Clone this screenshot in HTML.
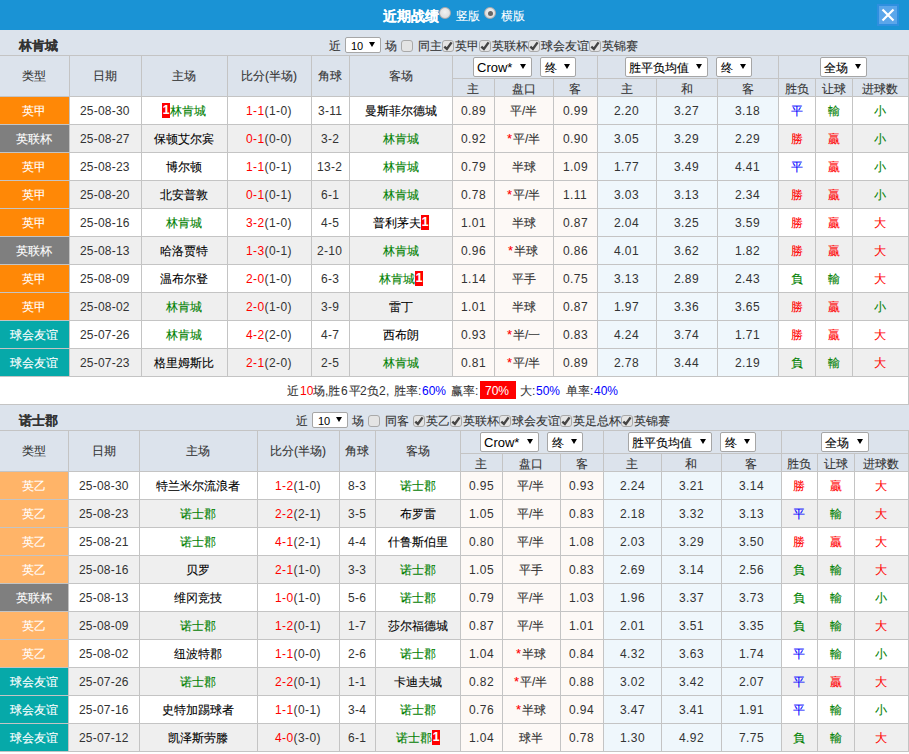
<!DOCTYPE html>
<html><head><meta charset="utf-8"><style>
html,body{margin:0;padding:0;}
body{width:909px;height:754px;overflow:hidden;position:relative;background:#fff;font-family:"Liberation Sans",sans-serif;font-size:12px;color:#333;}
.k{-webkit-text-stroke:0.1px;}
body div{position:absolute;box-sizing:border-box;}
.t{text-align:center;white-space:nowrap;}
.badge{display:inline-block;background:#f00;color:#fff;font-weight:bold;width:8px;height:15px;line-height:15px;text-align:center;vertical-align:middle;font-size:12px;position:relative;top:-1px;}
.cb{width:12px;height:12px;border:1px solid #a9a9a9;border-radius:3px;background:#e4e4e4;}
.cb svg{position:absolute;left:-1px;top:-1px;}
.sel{border:1px solid #a6a6a6;border-radius:2px;background:#fff;}
.sel .sl{color:#000;white-space:nowrap;}
.sel .ar{right:5px;top:50%;margin-top:-3px;width:0;height:0;border-left:3px solid transparent;border-right:3px solid transparent;border-top:5px solid #000;}

</style></head><body>
<div style="left:0px;top:0px;width:909px;height:30px;background:#1a93d5;"></div>
<div class="t k" style="left:383px;top:2px;height:28px;line-height:28px;text-align:left;font-size:14px;font-weight:bold;color:#fff;">近期战绩</div>
<div style="left:439px;top:7px;width:12px;height:12px;border-radius:50%;border:1px solid #b0aaaa;background:radial-gradient(circle at 50% 40%,#f2f2f2,#d6d6d6);"></div>
<div class="t k" style="left:456px;top:2px;height:28px;line-height:28px;text-align:left;color:#fff;">竖版</div>
<div style="left:484px;top:7px;width:12px;height:12px;border-radius:50%;border:1px solid #b0aaaa;background:radial-gradient(circle at 50% 40%,#f2f2f2,#d6d6d6);"><div style="left:2.5px;top:2.5px;width:5px;height:5px;border-radius:50%;background:#666;"></div></div>
<div class="t k" style="left:501px;top:2px;height:28px;line-height:28px;text-align:left;color:#fff;">横版</div>
<div style="left:877px;top:4px;width:22px;height:22px;background:#2f8fe0;"></div>
<div style="left:879px;top:6px;width:18px;height:18px;background:#5ba6ea;"></div>
<div style="left:879px;top:6px;width:18px;height:18px;"><svg width="18" height="18" viewBox="0 0 18 18"><path d="M3.5 3.5 L14.5 14.5 M14.5 3.5 L3.5 14.5" stroke="#fff" stroke-width="2.2"></path></svg></div>
<div style="left:0px;top:30px;width:909px;height:25px;background:#dce3ec;"></div>
<div class="t k" style="left:19px;top:33px;height:25px;line-height:25px;text-align:left;font-weight:bold;font-size:13px;color:#333;">林肯城</div>
<div class="t k" style="left:329px;top:34px;height:25px;line-height:25px;text-align:left;">近</div>
<div class="sel" style="left:345px;top:37px;width:36px;height:16px;"><div class="sl" style="left:5px;top:1px;height:14px;line-height:14px;font-size:11px">10</div><div class="ar"></div></div>
<div class="t k" style="left:385px;top:34px;height:25px;line-height:25px;text-align:left;">场</div>
<div class="cb" style="left:401px;top:40px"></div>
<div class="t k" style="left:418px;top:34px;height:25px;line-height:25px;text-align:left;">同主</div>
<div class="cb" style="left:442px;top:40px"><svg width="12" height="12" viewBox="0 0 12 12"><path d="M2.3 6.6 L4.9 9.0 L9.6 2.4" fill="none" stroke="#444" stroke-width="2.4"></path></svg></div>
<div class="t k" style="left:455px;top:34px;height:25px;line-height:25px;text-align:left;">英甲</div>
<div class="cb" style="left:479px;top:40px"><svg width="12" height="12" viewBox="0 0 12 12"><path d="M2.3 6.6 L4.9 9.0 L9.6 2.4" fill="none" stroke="#444" stroke-width="2.4"></path></svg></div>
<div class="t k" style="left:492px;top:34px;height:25px;line-height:25px;text-align:left;">英联杯</div>
<div class="cb" style="left:528px;top:40px"><svg width="12" height="12" viewBox="0 0 12 12"><path d="M2.3 6.6 L4.9 9.0 L9.6 2.4" fill="none" stroke="#444" stroke-width="2.4"></path></svg></div>
<div class="t k" style="left:541px;top:34px;height:25px;line-height:25px;text-align:left;">球会友谊</div>
<div class="cb" style="left:589px;top:40px"><svg width="12" height="12" viewBox="0 0 12 12"><path d="M2.3 6.6 L4.9 9.0 L9.6 2.4" fill="none" stroke="#444" stroke-width="2.4"></path></svg></div>
<div class="t k" style="left:602px;top:34px;height:25px;line-height:25px;text-align:left;">英锦赛</div>
<div style="left:0px;top:55px;width:909px;height:1px;background:#c4c4c4;"></div>
<div style="left:0px;top:56px;width:909px;height:40px;background:#dce3ec;"></div>
<div style="left:0px;top:96px;width:909px;height:1px;background:#c4c4c4;"></div>
<div style="left:452px;top:78px;width:457px;height:1px;background:#c4c4c4;"></div>
<div class="t k" style="left: 22px; top: 56px; height: 40px; line-height: 40px; color: rgb(51, 51, 51); text-align: left;"><span>类型</span></div>
<div class="t k" style="left: 93px; top: 56px; height: 40px; line-height: 40px; color: rgb(51, 51, 51); text-align: left;"><span>日期</span></div>
<div class="t k" style="left: 172px; top: 56px; height: 40px; line-height: 40px; color: rgb(51, 51, 51); text-align: left;"><span>主场</span></div>
<div class="t k" style="left: 241px; top: 56px; height: 40px; line-height: 40px; color: rgb(51, 51, 51); text-align: left;"><span>比分(半场)</span></div>
<div class="t k" style="left: 318px; top: 56px; height: 40px; line-height: 40px; color: rgb(51, 51, 51); text-align: left;"><span>角球</span></div>
<div class="t k" style="left: 389px; top: 56px; height: 40px; line-height: 40px; color: rgb(51, 51, 51); text-align: left;"><span>客场</span></div>
<div class="t k" style="left: 467px; top: 81px; height: 17px; line-height: 17px; color: rgb(51, 51, 51); text-align: left;"><span>主</span></div>
<div class="t k" style="left: 512px; top: 81px; height: 17px; line-height: 17px; color: rgb(51, 51, 51); text-align: left;"><span>盘口</span></div>
<div class="t k" style="left: 569px; top: 81px; height: 17px; line-height: 17px; color: rgb(51, 51, 51); text-align: left;"><span>客</span></div>
<div class="t k" style="left: 621px; top: 81px; height: 17px; line-height: 17px; color: rgb(51, 51, 51); text-align: left;"><span>主</span></div>
<div class="t k" style="left: 681px; top: 81px; height: 17px; line-height: 17px; color: rgb(51, 51, 51); text-align: left;"><span>和</span></div>
<div class="t k" style="left: 742px; top: 81px; height: 17px; line-height: 17px; color: rgb(51, 51, 51); text-align: left;"><span>客</span></div>
<div class="t k" style="left: 785px; top: 81px; height: 17px; line-height: 17px; color: rgb(51, 51, 51); text-align: left;"><span>胜负</span></div>
<div class="t k" style="left: 822px; top: 81px; height: 17px; line-height: 17px; color: rgb(51, 51, 51); text-align: left;"><span>让球</span></div>
<div class="t k" style="left: 862px; top: 81px; height: 17px; line-height: 17px; color: rgb(51, 51, 51); text-align: left;"><span>进球数</span></div>
<div style="left:0px;top:97px;width:909px;height:27px;background:#fff;"></div>
<div style="left:0px;top:97px;width:69px;height:27px;background:#ff8806;"></div>
<div style="left:453px;top:97px;width:144px;height:27px;background:#fdf9f6;"></div>
<div style="left:598px;top:97px;width:180px;height:27px;background:#eff7fc;"></div>
<div class="t k" style="left: 22px; top: 98px; height: 27px; line-height: 27px; color: rgb(255, 255, 255); text-align: left;"><span>英甲</span></div>
<div class="t" style="left: 80px; top: 98px; height: 27px; line-height: 27px; color: rgb(51, 51, 51); letter-spacing: 0.2px; text-align: left;"><span>25-08-30</span></div>
<div class="t k" style="left: 162px; top: 98px; height: 27px; line-height: 27px; text-align: left;"><span><span class="badge">1</span><span style="color:#008000">林肯城</span></span></div>
<div class="t" style="left: 246px; top: 98px; height: 27px; line-height: 27px; color: rgb(51, 51, 51); letter-spacing: 0.4px; text-align: left;"><span><span style="color:#ff0000">1-1</span>(1-0)</span></div>
<div class="t" style="left: 318px; top: 98px; height: 27px; line-height: 27px; color: rgb(51, 51, 51); letter-spacing: 0.3px; text-align: left;"><span>3-11</span></div>
<div class="t k" style="left: 365px; top: 98px; height: 27px; line-height: 27px; text-align: left;"><span><span style="color:#000">曼斯菲尔德城</span></span></div>
<div class="t" style="left: 461px; top: 98px; height: 27px; line-height: 27px; color: rgb(51, 51, 51); letter-spacing: 0.4px; text-align: left;"><span>0.89</span></div>
<div class="t k" style="left: 510px; top: 98px; height: 27px; line-height: 27px; color: rgb(51, 51, 51); text-align: left;"><span>平/半</span></div>
<div class="t" style="left: 563px; top: 98px; height: 27px; line-height: 27px; color: rgb(51, 51, 51); letter-spacing: 0.4px; text-align: left;"><span>0.99</span></div>
<div class="t" style="left: 614px; top: 98px; height: 27px; line-height: 27px; color: rgb(51, 51, 51); letter-spacing: 0.4px; text-align: left;"><span>2.20</span></div>
<div class="t" style="left: 674px; top: 98px; height: 27px; line-height: 27px; color: rgb(51, 51, 51); letter-spacing: 0.4px; text-align: left;"><span>3.27</span></div>
<div class="t" style="left: 735px; top: 98px; height: 27px; line-height: 27px; color: rgb(51, 51, 51); letter-spacing: 0.4px; text-align: left;"><span>3.18</span></div>
<div class="t k" style="left: 791px; top: 98px; height: 27px; line-height: 27px; text-align: left;"><span><span style="color:#0000ff">平</span></span></div>
<div class="t k" style="left: 828px; top: 98px; height: 27px; line-height: 27px; text-align: left;"><span><span style="color:#008000">輸</span></span></div>
<div class="t k" style="left: 874px; top: 98px; height: 27px; line-height: 27px; text-align: left;"><span><span style="color:#008000">小</span></span></div>
<div style="left:0px;top:124px;width:909px;height:1px;background:#c4c4c4;"></div>
<div style="left:0px;top:125px;width:909px;height:27px;background:#efefef;"></div>
<div style="left:0px;top:125px;width:69px;height:27px;background:#7f7f7f;"></div>
<div style="left:453px;top:125px;width:144px;height:27px;background:#fdf9f6;"></div>
<div style="left:598px;top:125px;width:180px;height:27px;background:#eff7fc;"></div>
<div class="t k" style="left: 16px; top: 126px; height: 27px; line-height: 27px; color: rgb(255, 255, 255); text-align: left;"><span>英联杯</span></div>
<div class="t" style="left: 80px; top: 126px; height: 27px; line-height: 27px; color: rgb(51, 51, 51); letter-spacing: 0.2px; text-align: left;"><span>25-08-27</span></div>
<div class="t k" style="left: 154px; top: 126px; height: 27px; line-height: 27px; text-align: left;"><span><span style="color:#000">保顿艾尔宾</span></span></div>
<div class="t" style="left: 246px; top: 126px; height: 27px; line-height: 27px; color: rgb(51, 51, 51); letter-spacing: 0.4px; text-align: left;"><span><span style="color:#ff0000">0-1</span>(0-0)</span></div>
<div class="t" style="left: 321px; top: 126px; height: 27px; line-height: 27px; color: rgb(51, 51, 51); letter-spacing: 0.3px; text-align: left;"><span>3-2</span></div>
<div class="t k" style="left: 383px; top: 126px; height: 27px; line-height: 27px; text-align: left;"><span><span style="color:#008000">林肯城</span></span></div>
<div class="t" style="left: 461px; top: 126px; height: 27px; line-height: 27px; color: rgb(51, 51, 51); letter-spacing: 0.4px; text-align: left;"><span>0.92</span></div>
<div class="t k" style="left: 507px; top: 126px; height: 27px; line-height: 27px; color: rgb(51, 51, 51); text-align: left;"><span><span style="color:#ff0000;font-size:13px;margin-right:1px;line-height:0;">*</span>平/半</span></div>
<div class="t" style="left: 563px; top: 126px; height: 27px; line-height: 27px; color: rgb(51, 51, 51); letter-spacing: 0.4px; text-align: left;"><span>0.90</span></div>
<div class="t" style="left: 614px; top: 126px; height: 27px; line-height: 27px; color: rgb(51, 51, 51); letter-spacing: 0.4px; text-align: left;"><span>3.05</span></div>
<div class="t" style="left: 674px; top: 126px; height: 27px; line-height: 27px; color: rgb(51, 51, 51); letter-spacing: 0.4px; text-align: left;"><span>3.29</span></div>
<div class="t" style="left: 735px; top: 126px; height: 27px; line-height: 27px; color: rgb(51, 51, 51); letter-spacing: 0.4px; text-align: left;"><span>2.29</span></div>
<div class="t k" style="left: 791px; top: 126px; height: 27px; line-height: 27px; text-align: left;"><span><span style="color:#ff0000">勝</span></span></div>
<div class="t k" style="left: 828px; top: 126px; height: 27px; line-height: 27px; text-align: left;"><span><span style="color:#ff0000">贏</span></span></div>
<div class="t k" style="left: 874px; top: 126px; height: 27px; line-height: 27px; text-align: left;"><span><span style="color:#008000">小</span></span></div>
<div style="left:0px;top:152px;width:909px;height:1px;background:#c4c4c4;"></div>
<div style="left:0px;top:153px;width:909px;height:27px;background:#fff;"></div>
<div style="left:0px;top:153px;width:69px;height:27px;background:#ff8806;"></div>
<div style="left:453px;top:153px;width:144px;height:27px;background:#fdf9f6;"></div>
<div style="left:598px;top:153px;width:180px;height:27px;background:#eff7fc;"></div>
<div class="t k" style="left: 22px; top: 154px; height: 27px; line-height: 27px; color: rgb(255, 255, 255); text-align: left;"><span>英甲</span></div>
<div class="t" style="left: 80px; top: 154px; height: 27px; line-height: 27px; color: rgb(51, 51, 51); letter-spacing: 0.2px; text-align: left;"><span>25-08-23</span></div>
<div class="t k" style="left: 166px; top: 154px; height: 27px; line-height: 27px; text-align: left;"><span><span style="color:#000">博尔顿</span></span></div>
<div class="t" style="left: 246px; top: 154px; height: 27px; line-height: 27px; color: rgb(51, 51, 51); letter-spacing: 0.4px; text-align: left;"><span><span style="color:#ff0000">1-1</span>(0-1)</span></div>
<div class="t" style="left: 317px; top: 154px; height: 27px; line-height: 27px; color: rgb(51, 51, 51); letter-spacing: 0.3px; text-align: left;"><span>13-2</span></div>
<div class="t k" style="left: 383px; top: 154px; height: 27px; line-height: 27px; text-align: left;"><span><span style="color:#008000">林肯城</span></span></div>
<div class="t" style="left: 461px; top: 154px; height: 27px; line-height: 27px; color: rgb(51, 51, 51); letter-spacing: 0.4px; text-align: left;"><span>0.79</span></div>
<div class="t k" style="left: 512px; top: 154px; height: 27px; line-height: 27px; color: rgb(51, 51, 51); text-align: left;"><span>半球</span></div>
<div class="t" style="left: 563px; top: 154px; height: 27px; line-height: 27px; color: rgb(51, 51, 51); letter-spacing: 0.4px; text-align: left;"><span>1.09</span></div>
<div class="t" style="left: 614px; top: 154px; height: 27px; line-height: 27px; color: rgb(51, 51, 51); letter-spacing: 0.4px; text-align: left;"><span>1.77</span></div>
<div class="t" style="left: 674px; top: 154px; height: 27px; line-height: 27px; color: rgb(51, 51, 51); letter-spacing: 0.4px; text-align: left;"><span>3.49</span></div>
<div class="t" style="left: 735px; top: 154px; height: 27px; line-height: 27px; color: rgb(51, 51, 51); letter-spacing: 0.4px; text-align: left;"><span>4.41</span></div>
<div class="t k" style="left: 791px; top: 154px; height: 27px; line-height: 27px; text-align: left;"><span><span style="color:#0000ff">平</span></span></div>
<div class="t k" style="left: 828px; top: 154px; height: 27px; line-height: 27px; text-align: left;"><span><span style="color:#ff0000">贏</span></span></div>
<div class="t k" style="left: 874px; top: 154px; height: 27px; line-height: 27px; text-align: left;"><span><span style="color:#008000">小</span></span></div>
<div style="left:0px;top:180px;width:909px;height:1px;background:#c4c4c4;"></div>
<div style="left:0px;top:181px;width:909px;height:27px;background:#efefef;"></div>
<div style="left:0px;top:181px;width:69px;height:27px;background:#ff8806;"></div>
<div style="left:453px;top:181px;width:144px;height:27px;background:#fdf9f6;"></div>
<div style="left:598px;top:181px;width:180px;height:27px;background:#eff7fc;"></div>
<div class="t k" style="left: 22px; top: 182px; height: 27px; line-height: 27px; color: rgb(255, 255, 255); text-align: left;"><span>英甲</span></div>
<div class="t" style="left: 80px; top: 182px; height: 27px; line-height: 27px; color: rgb(51, 51, 51); letter-spacing: 0.2px; text-align: left;"><span>25-08-20</span></div>
<div class="t k" style="left: 160px; top: 182px; height: 27px; line-height: 27px; text-align: left;"><span><span style="color:#000">北安普敦</span></span></div>
<div class="t" style="left: 246px; top: 182px; height: 27px; line-height: 27px; color: rgb(51, 51, 51); letter-spacing: 0.4px; text-align: left;"><span><span style="color:#ff0000">0-1</span>(0-1)</span></div>
<div class="t" style="left: 321px; top: 182px; height: 27px; line-height: 27px; color: rgb(51, 51, 51); letter-spacing: 0.3px; text-align: left;"><span>6-1</span></div>
<div class="t k" style="left: 383px; top: 182px; height: 27px; line-height: 27px; text-align: left;"><span><span style="color:#008000">林肯城</span></span></div>
<div class="t" style="left: 461px; top: 182px; height: 27px; line-height: 27px; color: rgb(51, 51, 51); letter-spacing: 0.4px; text-align: left;"><span>0.78</span></div>
<div class="t k" style="left: 507px; top: 182px; height: 27px; line-height: 27px; color: rgb(51, 51, 51); text-align: left;"><span><span style="color:#ff0000;font-size:13px;margin-right:1px;line-height:0;">*</span>平/半</span></div>
<div class="t" style="left: 563px; top: 182px; height: 27px; line-height: 27px; color: rgb(51, 51, 51); letter-spacing: 0.4px; text-align: left;"><span>1.11</span></div>
<div class="t" style="left: 614px; top: 182px; height: 27px; line-height: 27px; color: rgb(51, 51, 51); letter-spacing: 0.4px; text-align: left;"><span>3.03</span></div>
<div class="t" style="left: 674px; top: 182px; height: 27px; line-height: 27px; color: rgb(51, 51, 51); letter-spacing: 0.4px; text-align: left;"><span>3.13</span></div>
<div class="t" style="left: 735px; top: 182px; height: 27px; line-height: 27px; color: rgb(51, 51, 51); letter-spacing: 0.4px; text-align: left;"><span>2.34</span></div>
<div class="t k" style="left: 791px; top: 182px; height: 27px; line-height: 27px; text-align: left;"><span><span style="color:#ff0000">勝</span></span></div>
<div class="t k" style="left: 828px; top: 182px; height: 27px; line-height: 27px; text-align: left;"><span><span style="color:#ff0000">贏</span></span></div>
<div class="t k" style="left: 874px; top: 182px; height: 27px; line-height: 27px; text-align: left;"><span><span style="color:#008000">小</span></span></div>
<div style="left:0px;top:208px;width:909px;height:1px;background:#c4c4c4;"></div>
<div style="left:0px;top:209px;width:909px;height:27px;background:#fff;"></div>
<div style="left:0px;top:209px;width:69px;height:27px;background:#ff8806;"></div>
<div style="left:453px;top:209px;width:144px;height:27px;background:#fdf9f6;"></div>
<div style="left:598px;top:209px;width:180px;height:27px;background:#eff7fc;"></div>
<div class="t k" style="left: 22px; top: 210px; height: 27px; line-height: 27px; color: rgb(255, 255, 255); text-align: left;"><span>英甲</span></div>
<div class="t" style="left: 80px; top: 210px; height: 27px; line-height: 27px; color: rgb(51, 51, 51); letter-spacing: 0.2px; text-align: left;"><span>25-08-16</span></div>
<div class="t k" style="left: 166px; top: 210px; height: 27px; line-height: 27px; text-align: left;"><span><span style="color:#008000">林肯城</span></span></div>
<div class="t" style="left: 246px; top: 210px; height: 27px; line-height: 27px; color: rgb(51, 51, 51); letter-spacing: 0.4px; text-align: left;"><span><span style="color:#ff0000">3-2</span>(1-0)</span></div>
<div class="t" style="left: 321px; top: 210px; height: 27px; line-height: 27px; color: rgb(51, 51, 51); letter-spacing: 0.3px; text-align: left;"><span>4-5</span></div>
<div class="t k" style="left: 373px; top: 210px; height: 27px; line-height: 27px; text-align: left;"><span><span style="color:#000">普利茅夫</span><span class="badge">1</span></span></div>
<div class="t" style="left: 461px; top: 210px; height: 27px; line-height: 27px; color: rgb(51, 51, 51); letter-spacing: 0.4px; text-align: left;"><span>1.01</span></div>
<div class="t k" style="left: 512px; top: 210px; height: 27px; line-height: 27px; color: rgb(51, 51, 51); text-align: left;"><span>半球</span></div>
<div class="t" style="left: 563px; top: 210px; height: 27px; line-height: 27px; color: rgb(51, 51, 51); letter-spacing: 0.4px; text-align: left;"><span>0.87</span></div>
<div class="t" style="left: 614px; top: 210px; height: 27px; line-height: 27px; color: rgb(51, 51, 51); letter-spacing: 0.4px; text-align: left;"><span>2.04</span></div>
<div class="t" style="left: 674px; top: 210px; height: 27px; line-height: 27px; color: rgb(51, 51, 51); letter-spacing: 0.4px; text-align: left;"><span>3.25</span></div>
<div class="t" style="left: 735px; top: 210px; height: 27px; line-height: 27px; color: rgb(51, 51, 51); letter-spacing: 0.4px; text-align: left;"><span>3.59</span></div>
<div class="t k" style="left: 791px; top: 210px; height: 27px; line-height: 27px; text-align: left;"><span><span style="color:#ff0000">勝</span></span></div>
<div class="t k" style="left: 828px; top: 210px; height: 27px; line-height: 27px; text-align: left;"><span><span style="color:#ff0000">贏</span></span></div>
<div class="t k" style="left: 874px; top: 210px; height: 27px; line-height: 27px; text-align: left;"><span><span style="color:#ff0000">大</span></span></div>
<div style="left:0px;top:236px;width:909px;height:1px;background:#c4c4c4;"></div>
<div style="left:0px;top:237px;width:909px;height:27px;background:#efefef;"></div>
<div style="left:0px;top:237px;width:69px;height:27px;background:#7f7f7f;"></div>
<div style="left:453px;top:237px;width:144px;height:27px;background:#fdf9f6;"></div>
<div style="left:598px;top:237px;width:180px;height:27px;background:#eff7fc;"></div>
<div class="t k" style="left: 16px; top: 238px; height: 27px; line-height: 27px; color: rgb(255, 255, 255); text-align: left;"><span>英联杯</span></div>
<div class="t" style="left: 80px; top: 238px; height: 27px; line-height: 27px; color: rgb(51, 51, 51); letter-spacing: 0.2px; text-align: left;"><span>25-08-13</span></div>
<div class="t k" style="left: 160px; top: 238px; height: 27px; line-height: 27px; text-align: left;"><span><span style="color:#000">哈洛贾特</span></span></div>
<div class="t" style="left: 246px; top: 238px; height: 27px; line-height: 27px; color: rgb(51, 51, 51); letter-spacing: 0.4px; text-align: left;"><span><span style="color:#ff0000">1-3</span>(0-1)</span></div>
<div class="t" style="left: 317px; top: 238px; height: 27px; line-height: 27px; color: rgb(51, 51, 51); letter-spacing: 0.3px; text-align: left;"><span>2-10</span></div>
<div class="t k" style="left: 383px; top: 238px; height: 27px; line-height: 27px; text-align: left;"><span><span style="color:#008000">林肯城</span></span></div>
<div class="t" style="left: 461px; top: 238px; height: 27px; line-height: 27px; color: rgb(51, 51, 51); letter-spacing: 0.4px; text-align: left;"><span>0.96</span></div>
<div class="t k" style="left: 508px; top: 238px; height: 27px; line-height: 27px; color: rgb(51, 51, 51); text-align: left;"><span><span style="color:#ff0000;font-size:13px;margin-right:1px;line-height:0;">*</span>半球</span></div>
<div class="t" style="left: 563px; top: 238px; height: 27px; line-height: 27px; color: rgb(51, 51, 51); letter-spacing: 0.4px; text-align: left;"><span>0.86</span></div>
<div class="t" style="left: 614px; top: 238px; height: 27px; line-height: 27px; color: rgb(51, 51, 51); letter-spacing: 0.4px; text-align: left;"><span>4.01</span></div>
<div class="t" style="left: 674px; top: 238px; height: 27px; line-height: 27px; color: rgb(51, 51, 51); letter-spacing: 0.4px; text-align: left;"><span>3.62</span></div>
<div class="t" style="left: 735px; top: 238px; height: 27px; line-height: 27px; color: rgb(51, 51, 51); letter-spacing: 0.4px; text-align: left;"><span>1.82</span></div>
<div class="t k" style="left: 791px; top: 238px; height: 27px; line-height: 27px; text-align: left;"><span><span style="color:#ff0000">勝</span></span></div>
<div class="t k" style="left: 828px; top: 238px; height: 27px; line-height: 27px; text-align: left;"><span><span style="color:#ff0000">贏</span></span></div>
<div class="t k" style="left: 874px; top: 238px; height: 27px; line-height: 27px; text-align: left;"><span><span style="color:#ff0000">大</span></span></div>
<div style="left:0px;top:264px;width:909px;height:1px;background:#c4c4c4;"></div>
<div style="left:0px;top:265px;width:909px;height:27px;background:#fff;"></div>
<div style="left:0px;top:265px;width:69px;height:27px;background:#ff8806;"></div>
<div style="left:453px;top:265px;width:144px;height:27px;background:#fdf9f6;"></div>
<div style="left:598px;top:265px;width:180px;height:27px;background:#eff7fc;"></div>
<div class="t k" style="left: 22px; top: 266px; height: 27px; line-height: 27px; color: rgb(255, 255, 255); text-align: left;"><span>英甲</span></div>
<div class="t" style="left: 80px; top: 266px; height: 27px; line-height: 27px; color: rgb(51, 51, 51); letter-spacing: 0.2px; text-align: left;"><span>25-08-09</span></div>
<div class="t k" style="left: 160px; top: 266px; height: 27px; line-height: 27px; text-align: left;"><span><span style="color:#000">温布尔登</span></span></div>
<div class="t" style="left: 246px; top: 266px; height: 27px; line-height: 27px; color: rgb(51, 51, 51); letter-spacing: 0.4px; text-align: left;"><span><span style="color:#ff0000">2-0</span>(1-0)</span></div>
<div class="t" style="left: 321px; top: 266px; height: 27px; line-height: 27px; color: rgb(51, 51, 51); letter-spacing: 0.3px; text-align: left;"><span>6-3</span></div>
<div class="t k" style="left: 379px; top: 266px; height: 27px; line-height: 27px; text-align: left;"><span><span style="color:#008000">林肯城</span><span class="badge">1</span></span></div>
<div class="t" style="left: 461px; top: 266px; height: 27px; line-height: 27px; color: rgb(51, 51, 51); letter-spacing: 0.4px; text-align: left;"><span>1.14</span></div>
<div class="t k" style="left: 512px; top: 266px; height: 27px; line-height: 27px; color: rgb(51, 51, 51); text-align: left;"><span>平手</span></div>
<div class="t" style="left: 563px; top: 266px; height: 27px; line-height: 27px; color: rgb(51, 51, 51); letter-spacing: 0.4px; text-align: left;"><span>0.75</span></div>
<div class="t" style="left: 614px; top: 266px; height: 27px; line-height: 27px; color: rgb(51, 51, 51); letter-spacing: 0.4px; text-align: left;"><span>3.13</span></div>
<div class="t" style="left: 674px; top: 266px; height: 27px; line-height: 27px; color: rgb(51, 51, 51); letter-spacing: 0.4px; text-align: left;"><span>2.89</span></div>
<div class="t" style="left: 735px; top: 266px; height: 27px; line-height: 27px; color: rgb(51, 51, 51); letter-spacing: 0.4px; text-align: left;"><span>2.43</span></div>
<div class="t k" style="left: 791px; top: 266px; height: 27px; line-height: 27px; text-align: left;"><span><span style="color:#008000">負</span></span></div>
<div class="t k" style="left: 828px; top: 266px; height: 27px; line-height: 27px; text-align: left;"><span><span style="color:#008000">輸</span></span></div>
<div class="t k" style="left: 874px; top: 266px; height: 27px; line-height: 27px; text-align: left;"><span><span style="color:#ff0000">大</span></span></div>
<div style="left:0px;top:292px;width:909px;height:1px;background:#c4c4c4;"></div>
<div style="left:0px;top:293px;width:909px;height:27px;background:#efefef;"></div>
<div style="left:0px;top:293px;width:69px;height:27px;background:#ff8806;"></div>
<div style="left:453px;top:293px;width:144px;height:27px;background:#fdf9f6;"></div>
<div style="left:598px;top:293px;width:180px;height:27px;background:#eff7fc;"></div>
<div class="t k" style="left: 22px; top: 294px; height: 27px; line-height: 27px; color: rgb(255, 255, 255); text-align: left;"><span>英甲</span></div>
<div class="t" style="left: 80px; top: 294px; height: 27px; line-height: 27px; color: rgb(51, 51, 51); letter-spacing: 0.2px; text-align: left;"><span>25-08-02</span></div>
<div class="t k" style="left: 166px; top: 294px; height: 27px; line-height: 27px; text-align: left;"><span><span style="color:#008000">林肯城</span></span></div>
<div class="t" style="left: 246px; top: 294px; height: 27px; line-height: 27px; color: rgb(51, 51, 51); letter-spacing: 0.4px; text-align: left;"><span><span style="color:#ff0000">2-0</span>(1-0)</span></div>
<div class="t" style="left: 321px; top: 294px; height: 27px; line-height: 27px; color: rgb(51, 51, 51); letter-spacing: 0.3px; text-align: left;"><span>3-9</span></div>
<div class="t k" style="left: 389px; top: 294px; height: 27px; line-height: 27px; text-align: left;"><span><span style="color:#000">雷丁</span></span></div>
<div class="t" style="left: 461px; top: 294px; height: 27px; line-height: 27px; color: rgb(51, 51, 51); letter-spacing: 0.4px; text-align: left;"><span>1.01</span></div>
<div class="t k" style="left: 512px; top: 294px; height: 27px; line-height: 27px; color: rgb(51, 51, 51); text-align: left;"><span>半球</span></div>
<div class="t" style="left: 563px; top: 294px; height: 27px; line-height: 27px; color: rgb(51, 51, 51); letter-spacing: 0.4px; text-align: left;"><span>0.87</span></div>
<div class="t" style="left: 614px; top: 294px; height: 27px; line-height: 27px; color: rgb(51, 51, 51); letter-spacing: 0.4px; text-align: left;"><span>1.97</span></div>
<div class="t" style="left: 674px; top: 294px; height: 27px; line-height: 27px; color: rgb(51, 51, 51); letter-spacing: 0.4px; text-align: left;"><span>3.36</span></div>
<div class="t" style="left: 735px; top: 294px; height: 27px; line-height: 27px; color: rgb(51, 51, 51); letter-spacing: 0.4px; text-align: left;"><span>3.65</span></div>
<div class="t k" style="left: 791px; top: 294px; height: 27px; line-height: 27px; text-align: left;"><span><span style="color:#ff0000">勝</span></span></div>
<div class="t k" style="left: 828px; top: 294px; height: 27px; line-height: 27px; text-align: left;"><span><span style="color:#ff0000">贏</span></span></div>
<div class="t k" style="left: 874px; top: 294px; height: 27px; line-height: 27px; text-align: left;"><span><span style="color:#008000">小</span></span></div>
<div style="left:0px;top:320px;width:909px;height:1px;background:#c4c4c4;"></div>
<div style="left:0px;top:321px;width:909px;height:27px;background:#fff;"></div>
<div style="left:0px;top:321px;width:69px;height:27px;background:#06a9a9;"></div>
<div style="left:453px;top:321px;width:144px;height:27px;background:#fdf9f6;"></div>
<div style="left:598px;top:321px;width:180px;height:27px;background:#eff7fc;"></div>
<div class="t k" style="left: 10px; top: 322px; height: 27px; line-height: 27px; color: rgb(255, 255, 255); text-align: left;"><span>球会友谊</span></div>
<div class="t" style="left: 80px; top: 322px; height: 27px; line-height: 27px; color: rgb(51, 51, 51); letter-spacing: 0.2px; text-align: left;"><span>25-07-26</span></div>
<div class="t k" style="left: 166px; top: 322px; height: 27px; line-height: 27px; text-align: left;"><span><span style="color:#008000">林肯城</span></span></div>
<div class="t" style="left: 246px; top: 322px; height: 27px; line-height: 27px; color: rgb(51, 51, 51); letter-spacing: 0.4px; text-align: left;"><span><span style="color:#ff0000">4-2</span>(2-0)</span></div>
<div class="t" style="left: 321px; top: 322px; height: 27px; line-height: 27px; color: rgb(51, 51, 51); letter-spacing: 0.3px; text-align: left;"><span>4-7</span></div>
<div class="t k" style="left: 383px; top: 322px; height: 27px; line-height: 27px; text-align: left;"><span><span style="color:#000">西布朗</span></span></div>
<div class="t" style="left: 461px; top: 322px; height: 27px; line-height: 27px; color: rgb(51, 51, 51); letter-spacing: 0.4px; text-align: left;"><span>0.93</span></div>
<div class="t k" style="left: 507px; top: 322px; height: 27px; line-height: 27px; color: rgb(51, 51, 51); text-align: left;"><span><span style="color:#ff0000;font-size:13px;margin-right:1px;line-height:0;">*</span>半/一</span></div>
<div class="t" style="left: 563px; top: 322px; height: 27px; line-height: 27px; color: rgb(51, 51, 51); letter-spacing: 0.4px; text-align: left;"><span>0.83</span></div>
<div class="t" style="left: 614px; top: 322px; height: 27px; line-height: 27px; color: rgb(51, 51, 51); letter-spacing: 0.4px; text-align: left;"><span>4.24</span></div>
<div class="t" style="left: 674px; top: 322px; height: 27px; line-height: 27px; color: rgb(51, 51, 51); letter-spacing: 0.4px; text-align: left;"><span>3.74</span></div>
<div class="t" style="left: 735px; top: 322px; height: 27px; line-height: 27px; color: rgb(51, 51, 51); letter-spacing: 0.4px; text-align: left;"><span>1.71</span></div>
<div class="t k" style="left: 791px; top: 322px; height: 27px; line-height: 27px; text-align: left;"><span><span style="color:#ff0000">勝</span></span></div>
<div class="t k" style="left: 828px; top: 322px; height: 27px; line-height: 27px; text-align: left;"><span><span style="color:#ff0000">贏</span></span></div>
<div class="t k" style="left: 874px; top: 322px; height: 27px; line-height: 27px; text-align: left;"><span><span style="color:#ff0000">大</span></span></div>
<div style="left:0px;top:348px;width:909px;height:1px;background:#c4c4c4;"></div>
<div style="left:0px;top:349px;width:909px;height:27px;background:#efefef;"></div>
<div style="left:0px;top:349px;width:69px;height:27px;background:#06a9a9;"></div>
<div style="left:453px;top:349px;width:144px;height:27px;background:#fdf9f6;"></div>
<div style="left:598px;top:349px;width:180px;height:27px;background:#eff7fc;"></div>
<div class="t k" style="left: 10px; top: 350px; height: 27px; line-height: 27px; color: rgb(255, 255, 255); text-align: left;"><span>球会友谊</span></div>
<div class="t" style="left: 80px; top: 350px; height: 27px; line-height: 27px; color: rgb(51, 51, 51); letter-spacing: 0.2px; text-align: left;"><span>25-07-23</span></div>
<div class="t k" style="left: 154px; top: 350px; height: 27px; line-height: 27px; text-align: left;"><span><span style="color:#000">格里姆斯比</span></span></div>
<div class="t" style="left: 246px; top: 350px; height: 27px; line-height: 27px; color: rgb(51, 51, 51); letter-spacing: 0.4px; text-align: left;"><span><span style="color:#ff0000">2-1</span>(2-0)</span></div>
<div class="t" style="left: 321px; top: 350px; height: 27px; line-height: 27px; color: rgb(51, 51, 51); letter-spacing: 0.3px; text-align: left;"><span>2-5</span></div>
<div class="t k" style="left: 383px; top: 350px; height: 27px; line-height: 27px; text-align: left;"><span><span style="color:#008000">林肯城</span></span></div>
<div class="t" style="left: 461px; top: 350px; height: 27px; line-height: 27px; color: rgb(51, 51, 51); letter-spacing: 0.4px; text-align: left;"><span>0.81</span></div>
<div class="t k" style="left: 507px; top: 350px; height: 27px; line-height: 27px; color: rgb(51, 51, 51); text-align: left;"><span><span style="color:#ff0000;font-size:13px;margin-right:1px;line-height:0;">*</span>平/半</span></div>
<div class="t" style="left: 563px; top: 350px; height: 27px; line-height: 27px; color: rgb(51, 51, 51); letter-spacing: 0.4px; text-align: left;"><span>0.89</span></div>
<div class="t" style="left: 614px; top: 350px; height: 27px; line-height: 27px; color: rgb(51, 51, 51); letter-spacing: 0.4px; text-align: left;"><span>2.78</span></div>
<div class="t" style="left: 674px; top: 350px; height: 27px; line-height: 27px; color: rgb(51, 51, 51); letter-spacing: 0.4px; text-align: left;"><span>3.44</span></div>
<div class="t" style="left: 735px; top: 350px; height: 27px; line-height: 27px; color: rgb(51, 51, 51); letter-spacing: 0.4px; text-align: left;"><span>2.19</span></div>
<div class="t k" style="left: 791px; top: 350px; height: 27px; line-height: 27px; text-align: left;"><span><span style="color:#008000">負</span></span></div>
<div class="t k" style="left: 828px; top: 350px; height: 27px; line-height: 27px; text-align: left;"><span><span style="color:#008000">輸</span></span></div>
<div class="t k" style="left: 874px; top: 350px; height: 27px; line-height: 27px; text-align: left;"><span><span style="color:#ff0000">大</span></span></div>
<div style="left:0px;top:376px;width:909px;height:1px;background:#c4c4c4;"></div>
<div style="left:69px;top:56px;width:1px;height:321px;background:#c4c4c4;"></div>
<div style="left:141px;top:56px;width:1px;height:321px;background:#c4c4c4;"></div>
<div style="left:227px;top:56px;width:1px;height:321px;background:#c4c4c4;"></div>
<div style="left:311px;top:56px;width:1px;height:321px;background:#c4c4c4;"></div>
<div style="left:349px;top:56px;width:1px;height:321px;background:#c4c4c4;"></div>
<div style="left:452px;top:56px;width:1px;height:321px;background:#c4c4c4;"></div>
<div style="left:597px;top:56px;width:1px;height:321px;background:#c4c4c4;"></div>
<div style="left:778px;top:56px;width:1px;height:321px;background:#c4c4c4;"></div>
<div style="left:908px;top:56px;width:1px;height:321px;background:#c4c4c4;"></div>
<div style="left:494px;top:78px;width:1px;height:299px;background:#c4c4c4;"></div>
<div style="left:553px;top:78px;width:1px;height:299px;background:#c4c4c4;"></div>
<div style="left:656px;top:78px;width:1px;height:299px;background:#c4c4c4;"></div>
<div style="left:717px;top:78px;width:1px;height:299px;background:#c4c4c4;"></div>
<div style="left:815px;top:78px;width:1px;height:299px;background:#c4c4c4;"></div>
<div style="left:852px;top:78px;width:1px;height:299px;background:#c4c4c4;"></div>
<div class="sel" style="left:473px;top:57px;width:59px;height:20px;"><div class="sl" style="left:3px;top:1px;height:18px;line-height:18px;font-size:13px">Crow*</div><div class="ar"></div></div>
<div class="sel" style="left:716px;top:57px;width:36px;height:20px;"><div class="sl k" style="left:4px;top:1px;height:18px;line-height:18px;font-size:12px">终</div><div class="ar"></div></div>
<div class="sel" style="left:540px;top:57px;width:36px;height:20px;"><div class="sl k" style="left:4px;top:1px;height:18px;line-height:18px;font-size:12px">终</div><div class="ar"></div></div>
<div class="sel" style="left:625px;top:57px;width:83px;height:20px;"><div class="sl k" style="left:3px;top:1px;height:18px;line-height:18px;font-size:12px">胜平负均值</div><div class="ar"></div></div>
<div class="sel" style="left:820px;top:57px;width:47px;height:20px;"><div class="sl k" style="left:3px;top:1px;height:18px;line-height:18px;font-size:12px">全场</div><div class="ar"></div></div>
<div style="left:0px;top:377px;width:909px;height:27px;background:#fff;"></div>
<div style="left:908px;top:377px;width:1px;height:27px;background:#c4c4c4;"></div>
<div style="left:0px;top:404px;width:909px;height:1px;background:#c4c4c4;"></div>
<div class="t k" style="left:287px;top:378px;height:27px;line-height:27px;text-align:left;color:#333;">近</div>
<div class="t" style="left:300px;top:378px;height:27px;line-height:27px;text-align:left;color:#f00;">10</div>
<div class="t k" style="left:313px;top:378px;height:27px;line-height:27px;text-align:left;color:#333;">场</div>
<div class="t" style="left:325px;top:378px;height:27px;line-height:27px;text-align:left;color:#333;">,</div>
<div class="t k" style="left:328px;top:378px;height:27px;line-height:27px;text-align:left;color:#333;">胜</div>
<div class="t" style="left:341px;top:378px;height:27px;line-height:27px;text-align:left;color:#333;">6</div>
<div class="t k" style="left:349px;top:378px;height:27px;line-height:27px;text-align:left;color:#333;">平</div>
<div class="t" style="left:360px;top:378px;height:27px;line-height:27px;text-align:left;color:#333;">2</div>
<div class="t k" style="left:367px;top:378px;height:27px;line-height:27px;text-align:left;color:#333;">负</div>
<div class="t" style="left:379px;top:378px;height:27px;line-height:27px;text-align:left;color:#333;">2</div>
<div class="t" style="left:386px;top:378px;height:27px;line-height:27px;text-align:left;color:#333;">,</div>
<div class="t k" style="left:394px;top:378px;height:27px;line-height:27px;text-align:left;color:#333;">胜率</div>
<div class="t" style="left:418px;top:378px;height:27px;line-height:27px;text-align:left;color:#333;">:</div>
<div class="t" style="left:422px;top:378px;height:27px;line-height:27px;text-align:left;color:#00f;">60%</div>
<div class="t k" style="left:451px;top:378px;height:27px;line-height:27px;text-align:left;color:#333;">赢率</div>
<div class="t" style="left:475px;top:378px;height:27px;line-height:27px;text-align:left;color:#333;">:</div>
<div class="t k" style="left:520px;top:378px;height:27px;line-height:27px;text-align:left;color:#333;">大</div>
<div class="t" style="left:532px;top:378px;height:27px;line-height:27px;text-align:left;color:#333;">:</div>
<div class="t" style="left:536px;top:378px;height:27px;line-height:27px;text-align:left;color:#00f;">50%</div>
<div class="t k" style="left:566px;top:378px;height:27px;line-height:27px;text-align:left;color:#333;">单率</div>
<div class="t" style="left:590px;top:378px;height:27px;line-height:27px;text-align:left;color:#333;">:</div>
<div class="t" style="left:594px;top:378px;height:27px;line-height:27px;text-align:left;color:#00f;">40%</div>
<div style="left:480px;top:381px;width:36px;height:18px;background:#f00;"></div>
<div class="t" style="left:485px;top:378px;height:27px;line-height:27px;text-align:left;color:#fff;">70%</div>
<div style="left:0px;top:405px;width:909px;height:25px;background:#dce3ec;"></div>
<div class="t k" style="left:19px;top:408px;height:25px;line-height:25px;text-align:left;font-weight:bold;font-size:13px;color:#333;">诺士郡</div>
<div class="t k" style="left:296px;top:409px;height:25px;line-height:25px;text-align:left;">近</div>
<div class="sel" style="left:312px;top:412px;width:36px;height:16px;"><div class="sl" style="left:5px;top:1px;height:14px;line-height:14px;font-size:11px">10</div><div class="ar"></div></div>
<div class="t k" style="left:352px;top:409px;height:25px;line-height:25px;text-align:left;">场</div>
<div class="cb" style="left:368px;top:415px"></div>
<div class="t k" style="left:385px;top:409px;height:25px;line-height:25px;text-align:left;">同客</div>
<div class="cb" style="left:413px;top:415px"><svg width="12" height="12" viewBox="0 0 12 12"><path d="M2.3 6.6 L4.9 9.0 L9.6 2.4" fill="none" stroke="#444" stroke-width="2.4"></path></svg></div>
<div class="t k" style="left:426px;top:409px;height:25px;line-height:25px;text-align:left;">英乙</div>
<div class="cb" style="left:450px;top:415px"><svg width="12" height="12" viewBox="0 0 12 12"><path d="M2.3 6.6 L4.9 9.0 L9.6 2.4" fill="none" stroke="#444" stroke-width="2.4"></path></svg></div>
<div class="t k" style="left:463px;top:409px;height:25px;line-height:25px;text-align:left;">英联杯</div>
<div class="cb" style="left:499px;top:415px"><svg width="12" height="12" viewBox="0 0 12 12"><path d="M2.3 6.6 L4.9 9.0 L9.6 2.4" fill="none" stroke="#444" stroke-width="2.4"></path></svg></div>
<div class="t k" style="left:512px;top:409px;height:25px;line-height:25px;text-align:left;">球会友谊</div>
<div class="cb" style="left:560px;top:415px"><svg width="12" height="12" viewBox="0 0 12 12"><path d="M2.3 6.6 L4.9 9.0 L9.6 2.4" fill="none" stroke="#444" stroke-width="2.4"></path></svg></div>
<div class="t k" style="left:573px;top:409px;height:25px;line-height:25px;text-align:left;">英足总杯</div>
<div class="cb" style="left:621px;top:415px"><svg width="12" height="12" viewBox="0 0 12 12"><path d="M2.3 6.6 L4.9 9.0 L9.6 2.4" fill="none" stroke="#444" stroke-width="2.4"></path></svg></div>
<div class="t k" style="left:634px;top:409px;height:25px;line-height:25px;text-align:left;">英锦赛</div>
<div style="left:0px;top:430px;width:909px;height:1px;background:#c4c4c4;"></div>
<div style="left:0px;top:431px;width:909px;height:40px;background:#dce3ec;"></div>
<div style="left:0px;top:471px;width:909px;height:1px;background:#c4c4c4;"></div>
<div style="left:460px;top:453px;width:449px;height:1px;background:#c4c4c4;"></div>
<div class="t k" style="left: 22px; top: 431px; height: 40px; line-height: 40px; color: rgb(51, 51, 51); text-align: left;"><span>类型</span></div>
<div class="t k" style="left: 92px; top: 431px; height: 40px; line-height: 40px; color: rgb(51, 51, 51); text-align: left;"><span>日期</span></div>
<div class="t k" style="left: 186px; top: 431px; height: 40px; line-height: 40px; color: rgb(51, 51, 51); text-align: left;"><span>主场</span></div>
<div class="t k" style="left: 270px; top: 431px; height: 40px; line-height: 40px; color: rgb(51, 51, 51); text-align: left;"><span>比分(半场)</span></div>
<div class="t k" style="left: 345px; top: 431px; height: 40px; line-height: 40px; color: rgb(51, 51, 51); text-align: left;"><span>角球</span></div>
<div class="t k" style="left: 406px; top: 431px; height: 40px; line-height: 40px; color: rgb(51, 51, 51); text-align: left;"><span>客场</span></div>
<div class="t k" style="left: 475px; top: 456px; height: 17px; line-height: 17px; color: rgb(51, 51, 51); text-align: left;"><span>主</span></div>
<div class="t k" style="left: 519px; top: 456px; height: 17px; line-height: 17px; color: rgb(51, 51, 51); text-align: left;"><span>盘口</span></div>
<div class="t k" style="left: 576px; top: 456px; height: 17px; line-height: 17px; color: rgb(51, 51, 51); text-align: left;"><span>客</span></div>
<div class="t k" style="left: 626px; top: 456px; height: 17px; line-height: 17px; color: rgb(51, 51, 51); text-align: left;"><span>主</span></div>
<div class="t k" style="left: 685px; top: 456px; height: 17px; line-height: 17px; color: rgb(51, 51, 51); text-align: left;"><span>和</span></div>
<div class="t k" style="left: 745px; top: 456px; height: 17px; line-height: 17px; color: rgb(51, 51, 51); text-align: left;"><span>客</span></div>
<div class="t k" style="left: 787px; top: 456px; height: 17px; line-height: 17px; color: rgb(51, 51, 51); text-align: left;"><span>胜负</span></div>
<div class="t k" style="left: 824px; top: 456px; height: 17px; line-height: 17px; color: rgb(51, 51, 51); text-align: left;"><span>让球</span></div>
<div class="t k" style="left: 863px; top: 456px; height: 17px; line-height: 17px; color: rgb(51, 51, 51); text-align: left;"><span>进球数</span></div>
<div style="left:0px;top:472px;width:909px;height:27px;background:#fff;"></div>
<div style="left:0px;top:472px;width:68px;height:27px;background:#ffb468;"></div>
<div style="left:461px;top:472px;width:142px;height:27px;background:#fdf9f6;"></div>
<div style="left:604px;top:472px;width:177px;height:27px;background:#eff7fc;"></div>
<div class="t k" style="left: 22px; top: 473px; height: 27px; line-height: 27px; color: rgb(255, 255, 255); text-align: left;"><span>英乙</span></div>
<div class="t" style="left: 79px; top: 473px; height: 27px; line-height: 27px; color: rgb(51, 51, 51); letter-spacing: 0.2px; text-align: left;"><span>25-08-30</span></div>
<div class="t k" style="left: 156px; top: 473px; height: 27px; line-height: 27px; text-align: left;"><span><span style="color:#000">特兰米尔流浪者</span></span></div>
<div class="t" style="left: 275px; top: 473px; height: 27px; line-height: 27px; color: rgb(51, 51, 51); letter-spacing: 0.4px; text-align: left;"><span><span style="color:#ff0000">1-2</span>(1-0)</span></div>
<div class="t" style="left: 348px; top: 473px; height: 27px; line-height: 27px; color: rgb(51, 51, 51); letter-spacing: 0.3px; text-align: left;"><span>8-3</span></div>
<div class="t k" style="left: 400px; top: 473px; height: 27px; line-height: 27px; text-align: left;"><span><span style="color:#008000">诺士郡</span></span></div>
<div class="t" style="left: 469px; top: 473px; height: 27px; line-height: 27px; color: rgb(51, 51, 51); letter-spacing: 0.4px; text-align: left;"><span>0.95</span></div>
<div class="t k" style="left: 517px; top: 473px; height: 27px; line-height: 27px; color: rgb(51, 51, 51); text-align: left;"><span>平/半</span></div>
<div class="t" style="left: 569px; top: 473px; height: 27px; line-height: 27px; color: rgb(51, 51, 51); letter-spacing: 0.4px; text-align: left;"><span>0.93</span></div>
<div class="t" style="left: 620px; top: 473px; height: 27px; line-height: 27px; color: rgb(51, 51, 51); letter-spacing: 0.4px; text-align: left;"><span>2.24</span></div>
<div class="t" style="left: 679px; top: 473px; height: 27px; line-height: 27px; color: rgb(51, 51, 51); letter-spacing: 0.4px; text-align: left;"><span>3.21</span></div>
<div class="t" style="left: 739px; top: 473px; height: 27px; line-height: 27px; color: rgb(51, 51, 51); letter-spacing: 0.4px; text-align: left;"><span>3.14</span></div>
<div class="t k" style="left: 793px; top: 473px; height: 27px; line-height: 27px; text-align: left;"><span><span style="color:#ff0000">勝</span></span></div>
<div class="t k" style="left: 830px; top: 473px; height: 27px; line-height: 27px; text-align: left;"><span><span style="color:#ff0000">贏</span></span></div>
<div class="t k" style="left: 875px; top: 473px; height: 27px; line-height: 27px; text-align: left;"><span><span style="color:#ff0000">大</span></span></div>
<div style="left:0px;top:499px;width:909px;height:1px;background:#c4c4c4;"></div>
<div style="left:0px;top:500px;width:909px;height:27px;background:#efefef;"></div>
<div style="left:0px;top:500px;width:68px;height:27px;background:#ffb468;"></div>
<div style="left:461px;top:500px;width:142px;height:27px;background:#fdf9f6;"></div>
<div style="left:604px;top:500px;width:177px;height:27px;background:#eff7fc;"></div>
<div class="t k" style="left: 22px; top: 501px; height: 27px; line-height: 27px; color: rgb(255, 255, 255); text-align: left;"><span>英乙</span></div>
<div class="t" style="left: 79px; top: 501px; height: 27px; line-height: 27px; color: rgb(51, 51, 51); letter-spacing: 0.2px; text-align: left;"><span>25-08-23</span></div>
<div class="t k" style="left: 180px; top: 501px; height: 27px; line-height: 27px; text-align: left;"><span><span style="color:#008000">诺士郡</span></span></div>
<div class="t" style="left: 275px; top: 501px; height: 27px; line-height: 27px; color: rgb(51, 51, 51); letter-spacing: 0.4px; text-align: left;"><span><span style="color:#ff0000">2-2</span>(2-1)</span></div>
<div class="t" style="left: 348px; top: 501px; height: 27px; line-height: 27px; color: rgb(51, 51, 51); letter-spacing: 0.3px; text-align: left;"><span>3-5</span></div>
<div class="t k" style="left: 400px; top: 501px; height: 27px; line-height: 27px; text-align: left;"><span><span style="color:#000">布罗雷</span></span></div>
<div class="t" style="left: 469px; top: 501px; height: 27px; line-height: 27px; color: rgb(51, 51, 51); letter-spacing: 0.4px; text-align: left;"><span>1.05</span></div>
<div class="t k" style="left: 517px; top: 501px; height: 27px; line-height: 27px; color: rgb(51, 51, 51); text-align: left;"><span>平/半</span></div>
<div class="t" style="left: 569px; top: 501px; height: 27px; line-height: 27px; color: rgb(51, 51, 51); letter-spacing: 0.4px; text-align: left;"><span>0.83</span></div>
<div class="t" style="left: 620px; top: 501px; height: 27px; line-height: 27px; color: rgb(51, 51, 51); letter-spacing: 0.4px; text-align: left;"><span>2.18</span></div>
<div class="t" style="left: 679px; top: 501px; height: 27px; line-height: 27px; color: rgb(51, 51, 51); letter-spacing: 0.4px; text-align: left;"><span>3.32</span></div>
<div class="t" style="left: 739px; top: 501px; height: 27px; line-height: 27px; color: rgb(51, 51, 51); letter-spacing: 0.4px; text-align: left;"><span>3.13</span></div>
<div class="t k" style="left: 793px; top: 501px; height: 27px; line-height: 27px; text-align: left;"><span><span style="color:#0000ff">平</span></span></div>
<div class="t k" style="left: 830px; top: 501px; height: 27px; line-height: 27px; text-align: left;"><span><span style="color:#008000">輸</span></span></div>
<div class="t k" style="left: 875px; top: 501px; height: 27px; line-height: 27px; text-align: left;"><span><span style="color:#ff0000">大</span></span></div>
<div style="left:0px;top:527px;width:909px;height:1px;background:#c4c4c4;"></div>
<div style="left:0px;top:528px;width:909px;height:27px;background:#fff;"></div>
<div style="left:0px;top:528px;width:68px;height:27px;background:#ffb468;"></div>
<div style="left:461px;top:528px;width:142px;height:27px;background:#fdf9f6;"></div>
<div style="left:604px;top:528px;width:177px;height:27px;background:#eff7fc;"></div>
<div class="t k" style="left: 22px; top: 529px; height: 27px; line-height: 27px; color: rgb(255, 255, 255); text-align: left;"><span>英乙</span></div>
<div class="t" style="left: 79px; top: 529px; height: 27px; line-height: 27px; color: rgb(51, 51, 51); letter-spacing: 0.2px; text-align: left;"><span>25-08-21</span></div>
<div class="t k" style="left: 180px; top: 529px; height: 27px; line-height: 27px; text-align: left;"><span><span style="color:#008000">诺士郡</span></span></div>
<div class="t" style="left: 275px; top: 529px; height: 27px; line-height: 27px; color: rgb(51, 51, 51); letter-spacing: 0.4px; text-align: left;"><span><span style="color:#ff0000">4-1</span>(2-1)</span></div>
<div class="t" style="left: 348px; top: 529px; height: 27px; line-height: 27px; color: rgb(51, 51, 51); letter-spacing: 0.3px; text-align: left;"><span>4-4</span></div>
<div class="t k" style="left: 388px; top: 529px; height: 27px; line-height: 27px; text-align: left;"><span><span style="color:#000">什鲁斯伯里</span></span></div>
<div class="t" style="left: 469px; top: 529px; height: 27px; line-height: 27px; color: rgb(51, 51, 51); letter-spacing: 0.4px; text-align: left;"><span>0.80</span></div>
<div class="t k" style="left: 517px; top: 529px; height: 27px; line-height: 27px; color: rgb(51, 51, 51); text-align: left;"><span>平/半</span></div>
<div class="t" style="left: 569px; top: 529px; height: 27px; line-height: 27px; color: rgb(51, 51, 51); letter-spacing: 0.4px; text-align: left;"><span>1.08</span></div>
<div class="t" style="left: 620px; top: 529px; height: 27px; line-height: 27px; color: rgb(51, 51, 51); letter-spacing: 0.4px; text-align: left;"><span>2.03</span></div>
<div class="t" style="left: 679px; top: 529px; height: 27px; line-height: 27px; color: rgb(51, 51, 51); letter-spacing: 0.4px; text-align: left;"><span>3.29</span></div>
<div class="t" style="left: 739px; top: 529px; height: 27px; line-height: 27px; color: rgb(51, 51, 51); letter-spacing: 0.4px; text-align: left;"><span>3.50</span></div>
<div class="t k" style="left: 793px; top: 529px; height: 27px; line-height: 27px; text-align: left;"><span><span style="color:#ff0000">勝</span></span></div>
<div class="t k" style="left: 830px; top: 529px; height: 27px; line-height: 27px; text-align: left;"><span><span style="color:#ff0000">贏</span></span></div>
<div class="t k" style="left: 875px; top: 529px; height: 27px; line-height: 27px; text-align: left;"><span><span style="color:#ff0000">大</span></span></div>
<div style="left:0px;top:555px;width:909px;height:1px;background:#c4c4c4;"></div>
<div style="left:0px;top:556px;width:909px;height:27px;background:#efefef;"></div>
<div style="left:0px;top:556px;width:68px;height:27px;background:#ffb468;"></div>
<div style="left:461px;top:556px;width:142px;height:27px;background:#fdf9f6;"></div>
<div style="left:604px;top:556px;width:177px;height:27px;background:#eff7fc;"></div>
<div class="t k" style="left: 22px; top: 557px; height: 27px; line-height: 27px; color: rgb(255, 255, 255); text-align: left;"><span>英乙</span></div>
<div class="t" style="left: 79px; top: 557px; height: 27px; line-height: 27px; color: rgb(51, 51, 51); letter-spacing: 0.2px; text-align: left;"><span>25-08-16</span></div>
<div class="t k" style="left: 186px; top: 557px; height: 27px; line-height: 27px; text-align: left;"><span><span style="color:#000">贝罗</span></span></div>
<div class="t" style="left: 275px; top: 557px; height: 27px; line-height: 27px; color: rgb(51, 51, 51); letter-spacing: 0.4px; text-align: left;"><span><span style="color:#ff0000">2-1</span>(1-0)</span></div>
<div class="t" style="left: 348px; top: 557px; height: 27px; line-height: 27px; color: rgb(51, 51, 51); letter-spacing: 0.3px; text-align: left;"><span>3-3</span></div>
<div class="t k" style="left: 400px; top: 557px; height: 27px; line-height: 27px; text-align: left;"><span><span style="color:#008000">诺士郡</span></span></div>
<div class="t" style="left: 469px; top: 557px; height: 27px; line-height: 27px; color: rgb(51, 51, 51); letter-spacing: 0.4px; text-align: left;"><span>1.05</span></div>
<div class="t k" style="left: 519px; top: 557px; height: 27px; line-height: 27px; color: rgb(51, 51, 51); text-align: left;"><span>平手</span></div>
<div class="t" style="left: 569px; top: 557px; height: 27px; line-height: 27px; color: rgb(51, 51, 51); letter-spacing: 0.4px; text-align: left;"><span>0.83</span></div>
<div class="t" style="left: 620px; top: 557px; height: 27px; line-height: 27px; color: rgb(51, 51, 51); letter-spacing: 0.4px; text-align: left;"><span>2.69</span></div>
<div class="t" style="left: 679px; top: 557px; height: 27px; line-height: 27px; color: rgb(51, 51, 51); letter-spacing: 0.4px; text-align: left;"><span>3.14</span></div>
<div class="t" style="left: 739px; top: 557px; height: 27px; line-height: 27px; color: rgb(51, 51, 51); letter-spacing: 0.4px; text-align: left;"><span>2.56</span></div>
<div class="t k" style="left: 793px; top: 557px; height: 27px; line-height: 27px; text-align: left;"><span><span style="color:#008000">負</span></span></div>
<div class="t k" style="left: 830px; top: 557px; height: 27px; line-height: 27px; text-align: left;"><span><span style="color:#008000">輸</span></span></div>
<div class="t k" style="left: 875px; top: 557px; height: 27px; line-height: 27px; text-align: left;"><span><span style="color:#ff0000">大</span></span></div>
<div style="left:0px;top:583px;width:909px;height:1px;background:#c4c4c4;"></div>
<div style="left:0px;top:584px;width:909px;height:27px;background:#fff;"></div>
<div style="left:0px;top:584px;width:68px;height:27px;background:#7f7f7f;"></div>
<div style="left:461px;top:584px;width:142px;height:27px;background:#fdf9f6;"></div>
<div style="left:604px;top:584px;width:177px;height:27px;background:#eff7fc;"></div>
<div class="t k" style="left: 16px; top: 585px; height: 27px; line-height: 27px; color: rgb(255, 255, 255); text-align: left;"><span>英联杯</span></div>
<div class="t" style="left: 79px; top: 585px; height: 27px; line-height: 27px; color: rgb(51, 51, 51); letter-spacing: 0.2px; text-align: left;"><span>25-08-13</span></div>
<div class="t k" style="left: 174px; top: 585px; height: 27px; line-height: 27px; text-align: left;"><span><span style="color:#000">维冈竞技</span></span></div>
<div class="t" style="left: 275px; top: 585px; height: 27px; line-height: 27px; color: rgb(51, 51, 51); letter-spacing: 0.4px; text-align: left;"><span><span style="color:#ff0000">1-0</span>(1-0)</span></div>
<div class="t" style="left: 348px; top: 585px; height: 27px; line-height: 27px; color: rgb(51, 51, 51); letter-spacing: 0.3px; text-align: left;"><span>5-6</span></div>
<div class="t k" style="left: 400px; top: 585px; height: 27px; line-height: 27px; text-align: left;"><span><span style="color:#008000">诺士郡</span></span></div>
<div class="t" style="left: 469px; top: 585px; height: 27px; line-height: 27px; color: rgb(51, 51, 51); letter-spacing: 0.4px; text-align: left;"><span>0.79</span></div>
<div class="t k" style="left: 517px; top: 585px; height: 27px; line-height: 27px; color: rgb(51, 51, 51); text-align: left;"><span>平/半</span></div>
<div class="t" style="left: 569px; top: 585px; height: 27px; line-height: 27px; color: rgb(51, 51, 51); letter-spacing: 0.4px; text-align: left;"><span>1.03</span></div>
<div class="t" style="left: 620px; top: 585px; height: 27px; line-height: 27px; color: rgb(51, 51, 51); letter-spacing: 0.4px; text-align: left;"><span>1.96</span></div>
<div class="t" style="left: 679px; top: 585px; height: 27px; line-height: 27px; color: rgb(51, 51, 51); letter-spacing: 0.4px; text-align: left;"><span>3.37</span></div>
<div class="t" style="left: 739px; top: 585px; height: 27px; line-height: 27px; color: rgb(51, 51, 51); letter-spacing: 0.4px; text-align: left;"><span>3.73</span></div>
<div class="t k" style="left: 793px; top: 585px; height: 27px; line-height: 27px; text-align: left;"><span><span style="color:#008000">負</span></span></div>
<div class="t k" style="left: 830px; top: 585px; height: 27px; line-height: 27px; text-align: left;"><span><span style="color:#008000">輸</span></span></div>
<div class="t k" style="left: 875px; top: 585px; height: 27px; line-height: 27px; text-align: left;"><span><span style="color:#008000">小</span></span></div>
<div style="left:0px;top:611px;width:909px;height:1px;background:#c4c4c4;"></div>
<div style="left:0px;top:612px;width:909px;height:27px;background:#efefef;"></div>
<div style="left:0px;top:612px;width:68px;height:27px;background:#ffb468;"></div>
<div style="left:461px;top:612px;width:142px;height:27px;background:#fdf9f6;"></div>
<div style="left:604px;top:612px;width:177px;height:27px;background:#eff7fc;"></div>
<div class="t k" style="left: 22px; top: 613px; height: 27px; line-height: 27px; color: rgb(255, 255, 255); text-align: left;"><span>英乙</span></div>
<div class="t" style="left: 79px; top: 613px; height: 27px; line-height: 27px; color: rgb(51, 51, 51); letter-spacing: 0.2px; text-align: left;"><span>25-08-09</span></div>
<div class="t k" style="left: 180px; top: 613px; height: 27px; line-height: 27px; text-align: left;"><span><span style="color:#008000">诺士郡</span></span></div>
<div class="t" style="left: 275px; top: 613px; height: 27px; line-height: 27px; color: rgb(51, 51, 51); letter-spacing: 0.4px; text-align: left;"><span><span style="color:#ff0000">1-2</span>(0-1)</span></div>
<div class="t" style="left: 348px; top: 613px; height: 27px; line-height: 27px; color: rgb(51, 51, 51); letter-spacing: 0.3px; text-align: left;"><span>1-7</span></div>
<div class="t k" style="left: 388px; top: 613px; height: 27px; line-height: 27px; text-align: left;"><span><span style="color:#000">莎尔福德城</span></span></div>
<div class="t" style="left: 469px; top: 613px; height: 27px; line-height: 27px; color: rgb(51, 51, 51); letter-spacing: 0.4px; text-align: left;"><span>0.87</span></div>
<div class="t k" style="left: 517px; top: 613px; height: 27px; line-height: 27px; color: rgb(51, 51, 51); text-align: left;"><span>平/半</span></div>
<div class="t" style="left: 569px; top: 613px; height: 27px; line-height: 27px; color: rgb(51, 51, 51); letter-spacing: 0.4px; text-align: left;"><span>1.01</span></div>
<div class="t" style="left: 620px; top: 613px; height: 27px; line-height: 27px; color: rgb(51, 51, 51); letter-spacing: 0.4px; text-align: left;"><span>2.01</span></div>
<div class="t" style="left: 679px; top: 613px; height: 27px; line-height: 27px; color: rgb(51, 51, 51); letter-spacing: 0.4px; text-align: left;"><span>3.51</span></div>
<div class="t" style="left: 739px; top: 613px; height: 27px; line-height: 27px; color: rgb(51, 51, 51); letter-spacing: 0.4px; text-align: left;"><span>3.35</span></div>
<div class="t k" style="left: 793px; top: 613px; height: 27px; line-height: 27px; text-align: left;"><span><span style="color:#008000">負</span></span></div>
<div class="t k" style="left: 830px; top: 613px; height: 27px; line-height: 27px; text-align: left;"><span><span style="color:#008000">輸</span></span></div>
<div class="t k" style="left: 875px; top: 613px; height: 27px; line-height: 27px; text-align: left;"><span><span style="color:#ff0000">大</span></span></div>
<div style="left:0px;top:639px;width:909px;height:1px;background:#c4c4c4;"></div>
<div style="left:0px;top:640px;width:909px;height:27px;background:#fff;"></div>
<div style="left:0px;top:640px;width:68px;height:27px;background:#ffb468;"></div>
<div style="left:461px;top:640px;width:142px;height:27px;background:#fdf9f6;"></div>
<div style="left:604px;top:640px;width:177px;height:27px;background:#eff7fc;"></div>
<div class="t k" style="left: 22px; top: 641px; height: 27px; line-height: 27px; color: rgb(255, 255, 255); text-align: left;"><span>英乙</span></div>
<div class="t" style="left: 79px; top: 641px; height: 27px; line-height: 27px; color: rgb(51, 51, 51); letter-spacing: 0.2px; text-align: left;"><span>25-08-02</span></div>
<div class="t k" style="left: 174px; top: 641px; height: 27px; line-height: 27px; text-align: left;"><span><span style="color:#000">纽波特郡</span></span></div>
<div class="t" style="left: 275px; top: 641px; height: 27px; line-height: 27px; color: rgb(51, 51, 51); letter-spacing: 0.4px; text-align: left;"><span><span style="color:#ff0000">1-1</span>(0-0)</span></div>
<div class="t" style="left: 348px; top: 641px; height: 27px; line-height: 27px; color: rgb(51, 51, 51); letter-spacing: 0.3px; text-align: left;"><span>2-6</span></div>
<div class="t k" style="left: 400px; top: 641px; height: 27px; line-height: 27px; text-align: left;"><span><span style="color:#008000">诺士郡</span></span></div>
<div class="t" style="left: 469px; top: 641px; height: 27px; line-height: 27px; color: rgb(51, 51, 51); letter-spacing: 0.4px; text-align: left;"><span>1.04</span></div>
<div class="t k" style="left: 516px; top: 641px; height: 27px; line-height: 27px; color: rgb(51, 51, 51); text-align: left;"><span><span style="color:#ff0000;font-size:13px;margin-right:1px;line-height:0;">*</span>半球</span></div>
<div class="t" style="left: 569px; top: 641px; height: 27px; line-height: 27px; color: rgb(51, 51, 51); letter-spacing: 0.4px; text-align: left;"><span>0.84</span></div>
<div class="t" style="left: 620px; top: 641px; height: 27px; line-height: 27px; color: rgb(51, 51, 51); letter-spacing: 0.4px; text-align: left;"><span>4.32</span></div>
<div class="t" style="left: 679px; top: 641px; height: 27px; line-height: 27px; color: rgb(51, 51, 51); letter-spacing: 0.4px; text-align: left;"><span>3.63</span></div>
<div class="t" style="left: 739px; top: 641px; height: 27px; line-height: 27px; color: rgb(51, 51, 51); letter-spacing: 0.4px; text-align: left;"><span>1.74</span></div>
<div class="t k" style="left: 793px; top: 641px; height: 27px; line-height: 27px; text-align: left;"><span><span style="color:#0000ff">平</span></span></div>
<div class="t k" style="left: 830px; top: 641px; height: 27px; line-height: 27px; text-align: left;"><span><span style="color:#008000">輸</span></span></div>
<div class="t k" style="left: 875px; top: 641px; height: 27px; line-height: 27px; text-align: left;"><span><span style="color:#008000">小</span></span></div>
<div style="left:0px;top:667px;width:909px;height:1px;background:#c4c4c4;"></div>
<div style="left:0px;top:668px;width:909px;height:27px;background:#efefef;"></div>
<div style="left:0px;top:668px;width:68px;height:27px;background:#06a9a9;"></div>
<div style="left:461px;top:668px;width:142px;height:27px;background:#fdf9f6;"></div>
<div style="left:604px;top:668px;width:177px;height:27px;background:#eff7fc;"></div>
<div class="t k" style="left: 10px; top: 669px; height: 27px; line-height: 27px; color: rgb(255, 255, 255); text-align: left;"><span>球会友谊</span></div>
<div class="t" style="left: 79px; top: 669px; height: 27px; line-height: 27px; color: rgb(51, 51, 51); letter-spacing: 0.2px; text-align: left;"><span>25-07-26</span></div>
<div class="t k" style="left: 180px; top: 669px; height: 27px; line-height: 27px; text-align: left;"><span><span style="color:#008000">诺士郡</span></span></div>
<div class="t" style="left: 275px; top: 669px; height: 27px; line-height: 27px; color: rgb(51, 51, 51); letter-spacing: 0.4px; text-align: left;"><span><span style="color:#ff0000">2-2</span>(0-1)</span></div>
<div class="t" style="left: 348px; top: 669px; height: 27px; line-height: 27px; color: rgb(51, 51, 51); letter-spacing: 0.3px; text-align: left;"><span>1-1</span></div>
<div class="t k" style="left: 394px; top: 669px; height: 27px; line-height: 27px; text-align: left;"><span><span style="color:#000">卡迪夫城</span></span></div>
<div class="t" style="left: 469px; top: 669px; height: 27px; line-height: 27px; color: rgb(51, 51, 51); letter-spacing: 0.4px; text-align: left;"><span>0.82</span></div>
<div class="t k" style="left: 514px; top: 669px; height: 27px; line-height: 27px; color: rgb(51, 51, 51); text-align: left;"><span><span style="color:#ff0000;font-size:13px;margin-right:1px;line-height:0;">*</span>平/半</span></div>
<div class="t" style="left: 569px; top: 669px; height: 27px; line-height: 27px; color: rgb(51, 51, 51); letter-spacing: 0.4px; text-align: left;"><span>0.88</span></div>
<div class="t" style="left: 620px; top: 669px; height: 27px; line-height: 27px; color: rgb(51, 51, 51); letter-spacing: 0.4px; text-align: left;"><span>3.02</span></div>
<div class="t" style="left: 679px; top: 669px; height: 27px; line-height: 27px; color: rgb(51, 51, 51); letter-spacing: 0.4px; text-align: left;"><span>3.42</span></div>
<div class="t" style="left: 739px; top: 669px; height: 27px; line-height: 27px; color: rgb(51, 51, 51); letter-spacing: 0.4px; text-align: left;"><span>2.07</span></div>
<div class="t k" style="left: 793px; top: 669px; height: 27px; line-height: 27px; text-align: left;"><span><span style="color:#0000ff">平</span></span></div>
<div class="t k" style="left: 830px; top: 669px; height: 27px; line-height: 27px; text-align: left;"><span><span style="color:#ff0000">贏</span></span></div>
<div class="t k" style="left: 875px; top: 669px; height: 27px; line-height: 27px; text-align: left;"><span><span style="color:#ff0000">大</span></span></div>
<div style="left:0px;top:695px;width:909px;height:1px;background:#c4c4c4;"></div>
<div style="left:0px;top:696px;width:909px;height:27px;background:#fff;"></div>
<div style="left:0px;top:696px;width:68px;height:27px;background:#06a9a9;"></div>
<div style="left:461px;top:696px;width:142px;height:27px;background:#fdf9f6;"></div>
<div style="left:604px;top:696px;width:177px;height:27px;background:#eff7fc;"></div>
<div class="t k" style="left: 10px; top: 697px; height: 27px; line-height: 27px; color: rgb(255, 255, 255); text-align: left;"><span>球会友谊</span></div>
<div class="t" style="left: 79px; top: 697px; height: 27px; line-height: 27px; color: rgb(51, 51, 51); letter-spacing: 0.2px; text-align: left;"><span>25-07-16</span></div>
<div class="t k" style="left: 162px; top: 697px; height: 27px; line-height: 27px; text-align: left;"><span><span style="color:#000">史特加踢球者</span></span></div>
<div class="t" style="left: 275px; top: 697px; height: 27px; line-height: 27px; color: rgb(51, 51, 51); letter-spacing: 0.4px; text-align: left;"><span><span style="color:#ff0000">1-1</span>(0-1)</span></div>
<div class="t" style="left: 348px; top: 697px; height: 27px; line-height: 27px; color: rgb(51, 51, 51); letter-spacing: 0.3px; text-align: left;"><span>3-4</span></div>
<div class="t k" style="left: 400px; top: 697px; height: 27px; line-height: 27px; text-align: left;"><span><span style="color:#008000">诺士郡</span></span></div>
<div class="t" style="left: 469px; top: 697px; height: 27px; line-height: 27px; color: rgb(51, 51, 51); letter-spacing: 0.4px; text-align: left;"><span>0.76</span></div>
<div class="t k" style="left: 516px; top: 697px; height: 27px; line-height: 27px; color: rgb(51, 51, 51); text-align: left;"><span><span style="color:#ff0000;font-size:13px;margin-right:1px;line-height:0;">*</span>半球</span></div>
<div class="t" style="left: 569px; top: 697px; height: 27px; line-height: 27px; color: rgb(51, 51, 51); letter-spacing: 0.4px; text-align: left;"><span>0.94</span></div>
<div class="t" style="left: 620px; top: 697px; height: 27px; line-height: 27px; color: rgb(51, 51, 51); letter-spacing: 0.4px; text-align: left;"><span>3.47</span></div>
<div class="t" style="left: 679px; top: 697px; height: 27px; line-height: 27px; color: rgb(51, 51, 51); letter-spacing: 0.4px; text-align: left;"><span>3.41</span></div>
<div class="t" style="left: 739px; top: 697px; height: 27px; line-height: 27px; color: rgb(51, 51, 51); letter-spacing: 0.4px; text-align: left;"><span>1.91</span></div>
<div class="t k" style="left: 793px; top: 697px; height: 27px; line-height: 27px; text-align: left;"><span><span style="color:#0000ff">平</span></span></div>
<div class="t k" style="left: 830px; top: 697px; height: 27px; line-height: 27px; text-align: left;"><span><span style="color:#008000">輸</span></span></div>
<div class="t k" style="left: 875px; top: 697px; height: 27px; line-height: 27px; text-align: left;"><span><span style="color:#008000">小</span></span></div>
<div style="left:0px;top:723px;width:909px;height:1px;background:#c4c4c4;"></div>
<div style="left:0px;top:724px;width:909px;height:27px;background:#efefef;"></div>
<div style="left:0px;top:724px;width:68px;height:27px;background:#06a9a9;"></div>
<div style="left:461px;top:724px;width:142px;height:27px;background:#fdf9f6;"></div>
<div style="left:604px;top:724px;width:177px;height:27px;background:#eff7fc;"></div>
<div class="t k" style="left: 10px; top: 725px; height: 27px; line-height: 27px; color: rgb(255, 255, 255); text-align: left;"><span>球会友谊</span></div>
<div class="t" style="left: 79px; top: 725px; height: 27px; line-height: 27px; color: rgb(51, 51, 51); letter-spacing: 0.2px; text-align: left;"><span>25-07-12</span></div>
<div class="t k" style="left: 168px; top: 725px; height: 27px; line-height: 27px; text-align: left;"><span><span style="color:#000">凯泽斯劳滕</span></span></div>
<div class="t" style="left: 275px; top: 725px; height: 27px; line-height: 27px; color: rgb(51, 51, 51); letter-spacing: 0.4px; text-align: left;"><span><span style="color:#ff0000">4-0</span>(3-0)</span></div>
<div class="t" style="left: 348px; top: 725px; height: 27px; line-height: 27px; color: rgb(51, 51, 51); letter-spacing: 0.3px; text-align: left;"><span>6-1</span></div>
<div class="t k" style="left: 396px; top: 725px; height: 27px; line-height: 27px; text-align: left;"><span><span style="color:#008000">诺士郡</span><span class="badge">1</span></span></div>
<div class="t" style="left: 469px; top: 725px; height: 27px; line-height: 27px; color: rgb(51, 51, 51); letter-spacing: 0.4px; text-align: left;"><span>1.04</span></div>
<div class="t k" style="left: 519px; top: 725px; height: 27px; line-height: 27px; color: rgb(51, 51, 51); text-align: left;"><span>球半</span></div>
<div class="t" style="left: 569px; top: 725px; height: 27px; line-height: 27px; color: rgb(51, 51, 51); letter-spacing: 0.4px; text-align: left;"><span>0.78</span></div>
<div class="t" style="left: 620px; top: 725px; height: 27px; line-height: 27px; color: rgb(51, 51, 51); letter-spacing: 0.4px; text-align: left;"><span>1.30</span></div>
<div class="t" style="left: 679px; top: 725px; height: 27px; line-height: 27px; color: rgb(51, 51, 51); letter-spacing: 0.4px; text-align: left;"><span>4.92</span></div>
<div class="t" style="left: 739px; top: 725px; height: 27px; line-height: 27px; color: rgb(51, 51, 51); letter-spacing: 0.4px; text-align: left;"><span>7.75</span></div>
<div class="t k" style="left: 793px; top: 725px; height: 27px; line-height: 27px; text-align: left;"><span><span style="color:#008000">負</span></span></div>
<div class="t k" style="left: 830px; top: 725px; height: 27px; line-height: 27px; text-align: left;"><span><span style="color:#008000">輸</span></span></div>
<div class="t k" style="left: 875px; top: 725px; height: 27px; line-height: 27px; text-align: left;"><span><span style="color:#ff0000">大</span></span></div>
<div style="left:0px;top:751px;width:909px;height:1px;background:#c4c4c4;"></div>
<div style="left:68px;top:431px;width:1px;height:321px;background:#c4c4c4;"></div>
<div style="left:139px;top:431px;width:1px;height:321px;background:#c4c4c4;"></div>
<div style="left:257px;top:431px;width:1px;height:321px;background:#c4c4c4;"></div>
<div style="left:339px;top:431px;width:1px;height:321px;background:#c4c4c4;"></div>
<div style="left:375px;top:431px;width:1px;height:321px;background:#c4c4c4;"></div>
<div style="left:460px;top:431px;width:1px;height:321px;background:#c4c4c4;"></div>
<div style="left:603px;top:431px;width:1px;height:321px;background:#c4c4c4;"></div>
<div style="left:781px;top:431px;width:1px;height:321px;background:#c4c4c4;"></div>
<div style="left:908px;top:431px;width:1px;height:321px;background:#c4c4c4;"></div>
<div style="left:502px;top:453px;width:1px;height:299px;background:#c4c4c4;"></div>
<div style="left:560px;top:453px;width:1px;height:299px;background:#c4c4c4;"></div>
<div style="left:661px;top:453px;width:1px;height:299px;background:#c4c4c4;"></div>
<div style="left:721px;top:453px;width:1px;height:299px;background:#c4c4c4;"></div>
<div style="left:817px;top:453px;width:1px;height:299px;background:#c4c4c4;"></div>
<div style="left:854px;top:453px;width:1px;height:299px;background:#c4c4c4;"></div>
<div class="sel" style="left:480px;top:432px;width:59px;height:20px;"><div class="sl" style="left:3px;top:1px;height:18px;line-height:18px;font-size:13px">Crow*</div><div class="ar"></div></div>
<div class="sel" style="left:547px;top:432px;width:36px;height:20px;"><div class="sl k" style="left:4px;top:1px;height:18px;line-height:18px;font-size:12px">终</div><div class="ar"></div></div>
<div class="sel" style="left:628px;top:432px;width:84px;height:20px;"><div class="sl k" style="left:3px;top:1px;height:18px;line-height:18px;font-size:12px">胜平负均值</div><div class="ar"></div></div>
<div class="sel" style="left:720px;top:432px;width:36px;height:20px;"><div class="sl k" style="left:4px;top:1px;height:18px;line-height:18px;font-size:12px">终</div><div class="ar"></div></div>
<div class="sel" style="left:821px;top:432px;width:48px;height:20px;"><div class="sl k" style="left:3px;top:1px;height:18px;line-height:18px;font-size:12px">全场</div><div class="ar"></div></div>
</body></html>
